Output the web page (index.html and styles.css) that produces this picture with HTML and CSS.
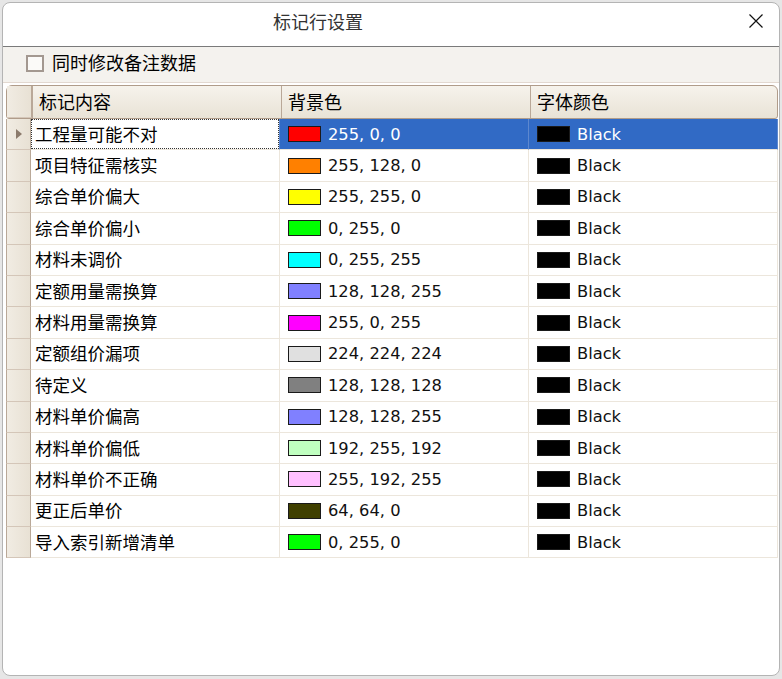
FILE: index.html
```html
<!DOCTYPE html>
<html lang="zh-CN">
<head>
    <meta charset="UTF-8">
    <title>标记行设置</title>
    <link rel="stylesheet" href="styles.css">
</head>
<body>
    <div class="window">
        <!-- Title bar -->
        <div class="titlebar">
            <span class="title">标记行设置</span>
            <svg class="close" width="16" height="16" viewBox="0 0 16 16">
                <path d="M1.5 1.5 L14.5 14.5 M14.5 1.5 L1.5 14.5" stroke="#111" stroke-width="1.2" fill="none"/>
            </svg>
        </div>

        <!-- Options -->
        <div class="toolbar">
            <span class="checkbox"></span>
            <span class="check-label">同时修改备注数据</span>
        </div>

        <!-- Grid -->
        <div class="grid">
            <div class="grid-header">
                <div class="hcell rowhead"></div>
                <div class="hcell">标记内容</div>
                <div class="hcell">背景色</div>
                <div class="hcell">字体颜色</div>
            </div>

            <div class="grid-row selected">
                <div class="rowhead"><span class="arrow"></span></div>
                <div class="cell name"><span class="focus">工程量可能不对</span></div>
                <div class="cell"><span class="swatch" style="background:#ff0000"></span>255, 0, 0</div>
                <div class="cell"><span class="swatch" style="background:#000"></span>Black</div>
            </div>
            <div class="grid-row">
                <div class="rowhead"></div>
                <div class="cell name">项目特征需核实</div>
                <div class="cell"><span class="swatch" style="background:#ff8000"></span>255, 128, 0</div>
                <div class="cell"><span class="swatch" style="background:#000"></span>Black</div>
            </div>
            <div class="grid-row">
                <div class="rowhead"></div>
                <div class="cell name">综合单价偏大</div>
                <div class="cell"><span class="swatch" style="background:#ffff00"></span>255, 255, 0</div>
                <div class="cell"><span class="swatch" style="background:#000"></span>Black</div>
            </div>
            <div class="grid-row">
                <div class="rowhead"></div>
                <div class="cell name">综合单价偏小</div>
                <div class="cell"><span class="swatch" style="background:#00ff00"></span>0, 255, 0</div>
                <div class="cell"><span class="swatch" style="background:#000"></span>Black</div>
            </div>
            <div class="grid-row">
                <div class="rowhead"></div>
                <div class="cell name">材料未调价</div>
                <div class="cell"><span class="swatch" style="background:#00ffff"></span>0, 255, 255</div>
                <div class="cell"><span class="swatch" style="background:#000"></span>Black</div>
            </div>
            <div class="grid-row">
                <div class="rowhead"></div>
                <div class="cell name">定额用量需换算</div>
                <div class="cell"><span class="swatch" style="background:#8080ff"></span>128, 128, 255</div>
                <div class="cell"><span class="swatch" style="background:#000"></span>Black</div>
            </div>
            <div class="grid-row">
                <div class="rowhead"></div>
                <div class="cell name">材料用量需换算</div>
                <div class="cell"><span class="swatch" style="background:#ff00ff"></span>255, 0, 255</div>
                <div class="cell"><span class="swatch" style="background:#000"></span>Black</div>
            </div>
            <div class="grid-row">
                <div class="rowhead"></div>
                <div class="cell name">定额组价漏项</div>
                <div class="cell"><span class="swatch" style="background:#e0e0e0"></span>224, 224, 224</div>
                <div class="cell"><span class="swatch" style="background:#000"></span>Black</div>
            </div>
            <div class="grid-row">
                <div class="rowhead"></div>
                <div class="cell name">待定义</div>
                <div class="cell"><span class="swatch" style="background:#808080"></span>128, 128, 128</div>
                <div class="cell"><span class="swatch" style="background:#000"></span>Black</div>
            </div>
            <div class="grid-row">
                <div class="rowhead"></div>
                <div class="cell name">材料单价偏高</div>
                <div class="cell"><span class="swatch" style="background:#8080ff"></span>128, 128, 255</div>
                <div class="cell"><span class="swatch" style="background:#000"></span>Black</div>
            </div>
            <div class="grid-row">
                <div class="rowhead"></div>
                <div class="cell name">材料单价偏低</div>
                <div class="cell"><span class="swatch" style="background:#c0ffc0"></span>192, 255, 192</div>
                <div class="cell"><span class="swatch" style="background:#000"></span>Black</div>
            </div>
            <div class="grid-row">
                <div class="rowhead"></div>
                <div class="cell name">材料单价不正确</div>
                <div class="cell"><span class="swatch" style="background:#ffc0ff"></span>255, 192, 255</div>
                <div class="cell"><span class="swatch" style="background:#000"></span>Black</div>
            </div>
            <div class="grid-row">
                <div class="rowhead"></div>
                <div class="cell name">更正后单价</div>
                <div class="cell"><span class="swatch" style="background:#404000"></span>64, 64, 0</div>
                <div class="cell"><span class="swatch" style="background:#000"></span>Black</div>
            </div>
            <div class="grid-row">
                <div class="rowhead"></div>
                <div class="cell name">导入索引新增清单</div>
                <div class="cell"><span class="swatch" style="background:#00ff00"></span>0, 255, 0</div>
                <div class="cell"><span class="swatch" style="background:#000"></span>Black</div>
            </div>
        </div>
    </div>
</body>
</html>
```

FILE: styles.css
```css
/* Dialog: 标记行设置 */
:root {
    --grid-line: #ece6dc;
    --head-line: #b09c8a;
    --select-blue: #316ac5;
    --panel-bg: #f4f2ee;
}

* {
    box-sizing: border-box;
}

body {
    margin: 0;
    background-color: #e6e6e6;
    font-family: "DejaVu Sans", "Noto Sans CJK SC", sans-serif;
    color: #111;
}

.window {
    margin: 2px 2px 0 2px;
    width: 778px;
    height: 674px;
    border: 1px solid #b4b4b4;
    border-radius: 8px;
    background-color: white;
    overflow: hidden;
    display: flex;
    flex-direction: column;
}

.titlebar {
    height: 44px;
    flex-shrink: 0;
    border-bottom: 1px solid #7a7a7a;
    display: flex;
    align-items: center;
    padding: 0 0 8px 270px;
    position: relative;
}

.title {
    font-family: "Noto Sans CJK SC", sans-serif;
    font-size: 18px;
    color: #333;
}

.close {
    position: absolute;
    left: 745px;
    top: 10px;
}

.toolbar {
    height: 36px;
    flex-shrink: 0;
    background-color: var(--panel-bg);
    border-bottom: 1px solid #e2d8d0;
    display: flex;
    align-items: center;
    padding: 0 0 5px 23px;
    gap: 8px;
}

.checkbox {
    width: 18px;
    height: 17px;
    margin-top: 3px;
    border: 2px solid #a39890;
    background-color: #fbfaf8;
}

.check-label {
    font-family: "Noto Sans CJK SC", sans-serif;
    font-size: 18px;
    line-height: 1;
    color: #000;
}

.grid {
    margin: 2px 0 0 3px;
    width: 772px;
}

.grid-header {
    display: grid;
    grid-template-columns: 25px 249px 249px 249px;
    height: 34px;
    border: 1px solid var(--head-line);
    border-radius: 6px 6px 3px 3px;
    background: linear-gradient(#f6f3ec, #e9e3d6);
}

.hcell {
    font-family: "Noto Sans CJK SC", sans-serif;
    font-size: 18px;
    color: #000;
    display: flex;
    align-items: center;
    padding: 0 0 3px 6px;
    border-left: 1px solid #b9a898;
}

.hcell:first-child {
    border-left: none;
}

.grid-row {
    display: grid;
    grid-template-columns: 25px 249px 249px 249px;
    height: 31.4px;
}

.rowhead {
    background: linear-gradient(90deg, #f1ece3, #e8e1d4);
    border-left: 1px solid #b9a898;
    border-right: 1px solid #b9a898;
    border-bottom: 1px solid #d4c6b8;
    display: flex;
    align-items: center;
    padding-left: 9px;
}

.arrow {
    width: 0;
    height: 0;
    border-top: 5px solid transparent;
    border-bottom: 5px solid transparent;
    border-left: 6px solid #8c7b6c;
}

.cell {
    display: flex;
    align-items: center;
    padding-left: 8px;
    font-size: 16.3px;
    border-right: 1px solid var(--grid-line);
    border-bottom: 1px solid var(--grid-line);
    white-space: nowrap;
}

.cell.name {
    font-family: "Noto Sans CJK SC", sans-serif;
    font-size: 17.5px;
    color: #000;
    padding: 0 0 2px 4px;
}

.swatch {
    width: 33px;
    height: 16px;
    border: 1px solid #1a1a1a;
    margin-right: 7px;
    flex-shrink: 0;
}

/* selected row */
.selected .cell {
    background-color: var(--select-blue);
    color: white;
    border-right-color: #5d88cf;
}

.selected .cell.name {
    background-color: white;
    color: #000;
    padding: 0;
}

.focus {
    display: flex;
    align-items: center;
    width: 100%;
    height: 100%;
    padding: 0 0 2px 3px;
    border: 1px dotted #333;
}
```
